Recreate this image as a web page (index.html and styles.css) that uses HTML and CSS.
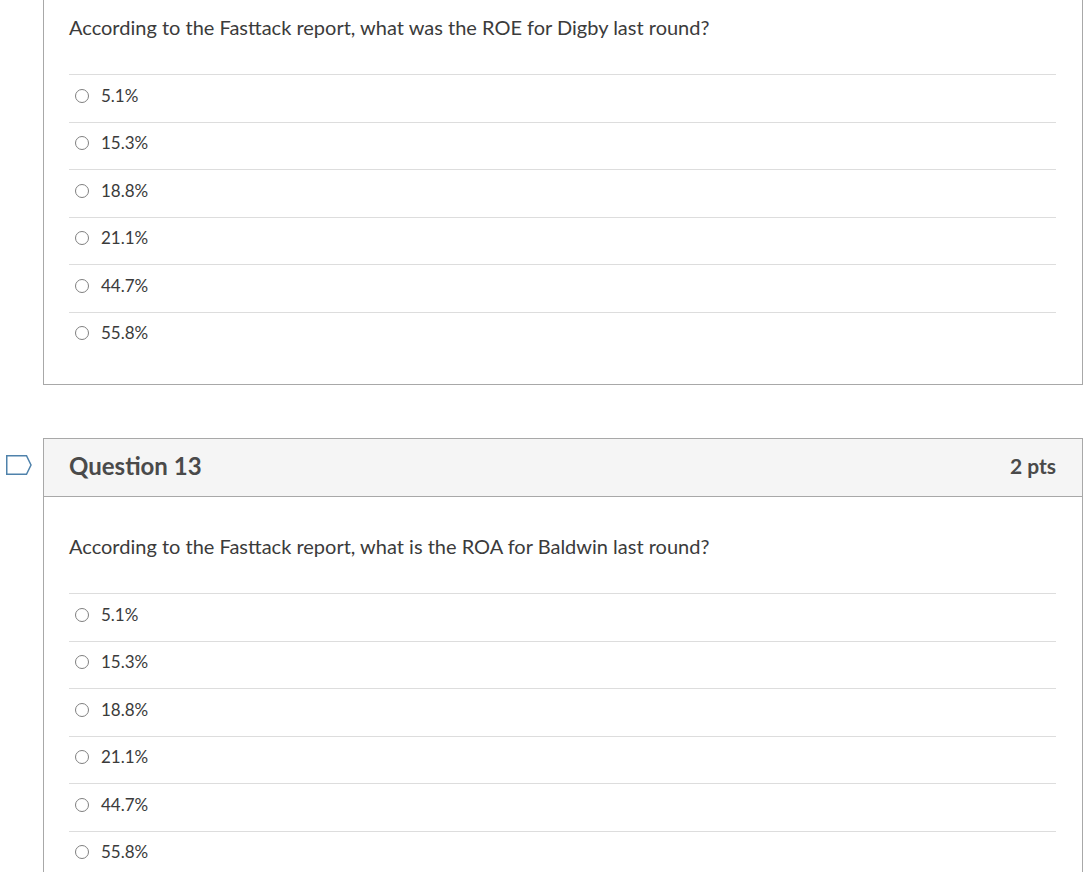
FILE: index.html
```html
<!DOCTYPE html>
<html lang="en">
<head>
<meta charset="utf-8">
<title>Quiz</title>
<link rel="stylesheet" href="styles.css">
</head>
<body>
<div class="questions">
  <div class="question-row">
    <div class="flag-col"></div>
    <div class="card card-continued">
      <div class="card-body">
        <div class="q-text">According to the Fasttack report, what was the ROE for Digby last round?</div>
        <div class="answers">
          <label class="answer"><span class="radio"></span><span class="answer-text">5.1%</span></label>
          <label class="answer"><span class="radio"></span><span class="answer-text">15.3%</span></label>
          <label class="answer"><span class="radio"></span><span class="answer-text">18.8%</span></label>
          <label class="answer"><span class="radio"></span><span class="answer-text">21.1%</span></label>
          <label class="answer"><span class="radio"></span><span class="answer-text">44.7%</span></label>
          <label class="answer"><span class="radio"></span><span class="answer-text">55.8%</span></label>
        </div>
      </div>
    </div>
  </div>

  <div class="question-row">
    <div class="flag-col">
      <svg class="flag" width="26" height="20" viewBox="0 0 26 20" aria-hidden="true">
        <path d="M0.75 0.75 H20.5 L25 10 L20.5 19.25 H0.75 Z" fill="none" stroke="#4f82ab" stroke-width="1.5" stroke-linejoin="miter"/>
      </svg>
    </div>
    <div class="card">
      <div class="card-header">
        <span class="q-title">Question 13</span>
        <span class="q-pts">2 pts</span>
      </div>
      <div class="card-body">
        <div class="q-text">According to the Fasttack report, what is the ROA for Baldwin last round?</div>
        <div class="answers">
          <label class="answer"><span class="radio"></span><span class="answer-text">5.1%</span></label>
          <label class="answer"><span class="radio"></span><span class="answer-text">15.3%</span></label>
          <label class="answer"><span class="radio"></span><span class="answer-text">18.8%</span></label>
          <label class="answer"><span class="radio"></span><span class="answer-text">21.1%</span></label>
          <label class="answer"><span class="radio"></span><span class="answer-text">44.7%</span></label>
          <label class="answer"><span class="radio"></span><span class="answer-text">55.8%</span></label>
        </div>
      </div>
    </div>
  </div>
</div>
</body>
</html>
```

FILE: styles.css
```css
html, body {
  margin: 0;
  padding: 0;
  background: #ffffff;
}

body {
  font-family: Lato, "Open Sans", "Liberation Sans", sans-serif;
  color: #3b3b3b;
  overflow: hidden;
}

.questions {
  display: flex;
  flex-direction: column;
  gap: 53px;
}

.question-row {
  display: flex;
  align-items: flex-start;
}

.flag-col {
  width: 43px;
  flex: 0 0 43px;
}

.flag {
  display: block;
  margin-top: 17px;
  margin-left: 6px;
}

.card {
  flex: 0 0 1040px;
  width: 1040px;
  box-sizing: border-box;
  border: 1px solid #a8a8a8;
}

.card-continued {
  border-top: none;
}

.card-header {
  box-sizing: border-box;
  height: 58px;
  background: #f5f5f5;
  border-bottom: 1px solid #a8a8a8;
  display: flex;
  align-items: center;
  justify-content: space-between;
  padding: 0 26px 5px 25px;
  color: #4a4a4a;
  font-weight: 700;
}

.q-title {
  font-size: 24px;
}

.q-pts {
  font-size: 21px;
}

.card-body {
  padding: 35px 26px 25px 25px;
}

.card-continued .card-body {
  padding-top: 13px;
}

.q-text {
  font-size: 20px;
  line-height: 28px;
  margin-bottom: 33px;
}

.answers {
  display: flex;
  flex-direction: column;
}

.answer {
  box-sizing: border-box;
  display: flex;
  align-items: center;
  border-top: 1px solid #dddddd;
  height: 47.5px;
  padding-bottom: 5px;
  font-size: 17px;
}

.radio {
  width: 14px;
  height: 14px;
  box-sizing: border-box;
  border: 1px solid #808080;
  border-radius: 50%;
  margin-left: 6px;
  margin-right: 12px;
}

.answer-text {
  line-height: 24px;
}
```
